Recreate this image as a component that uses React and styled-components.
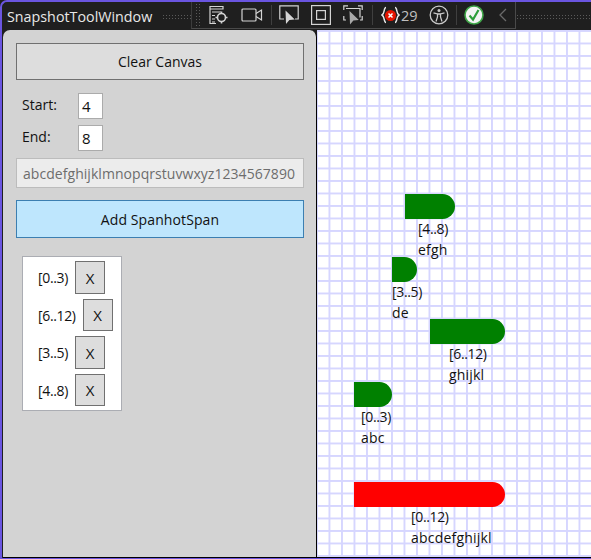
import styled, { createGlobalStyle } from 'styled-components'

const spans = [
  { id: 'a', left: 88, top: 164, width: 50, range: '[4..8)', text: 'efgh', indent: 13, color: '#008000' },
  { id: 'b', left: 75, top: 227, width: 25, range: '[3..5)', text: 'de', indent: 0, color: '#008000' },
  { id: 'c', left: 113, top: 289, width: 75, range: '[6..12)', text: 'ghijkl', indent: 19, color: '#008000' },
  { id: 'd', left: 37, top: 352, width: 38, range: '[0..3)', text: 'abc', indent: 7, color: '#008000' },
  { id: 'e', left: 37, top: 452, width: 151, range: '[0..12)', text: 'abcdefghijkl', indent: 57, color: '#ff0000' },
]

const rows = [
  { label: '[0..3)', tall: true },
  { label: '[6..12)', tall: false },
  { label: '[3..5)', tall: true },
  { label: '[4..8)', tall: false },
]

function App() {
  return (
    <Frame>
      <GlobalStyle />
      <TitleBar>
        <Title>SnapshotToolWindow</Title>
        <Gripper $fixed />
        <Toolbar>
          <VGrip />
          <Icon $w={20} $mr={12}>
            <svg width="20" height="20" viewBox="0 0 20 20" fill="none" stroke="#d4d4d4" strokeWidth="1.2">
              <path d="M1 1.500h13v2.500H1zM1 4v14.500h6M3 7h9M3 10.500h3M3 14h3M3 17h3" />
              <circle cx="12.500" cy="12.500" r="4" strokeWidth="1.600" />
              <path d="M12.500 6.500v2M12.500 16.500v2M6.500 12.500h2M16.500 12.500h2" strokeWidth="1.600" />
            </svg>
          </Icon>
          <Icon $w={22} $mr={8}>
            <svg width="22" height="14" viewBox="0 0 22 14" fill="none" stroke="#d4d4d4" strokeWidth="1.2">
              <rect x="1" y="1" width="14" height="12" rx="1" />
              <path d="M15 5.500 20.500 2v10L15 8.500" />
            </svg>
          </Icon>
          <Divider />
          <Icon $w={20} $ml={7} $mr={12}>
            <svg width="20" height="20" viewBox="0 0 20 20" fill="none" stroke="#d4d4d4" strokeWidth="1.2">
              <path d="M5 14H.8V.8h18.400V14H16" />
              <path d="M6.500 5.500 7 19l3.400-4 5.400-.4z" fill="#d4d4d4" stroke="none" />
            </svg>
          </Icon>
          <Icon $w={20} $mr={12}>
            <svg width="20" height="20" viewBox="0 0 20 20" fill="none" stroke="#d4d4d4" strokeWidth="1.2">
              <rect x=".6" y=".6" width="18.800" height="18.800" />
              <rect x="5.600" y="5.600" width="8.800" height="8.800" />
            </svg>
          </Icon>
          <Icon $w={20} $mr={9}>
            <svg width="20" height="20" viewBox="0 0 20 20" fill="none" stroke="#d4d4d4" strokeWidth="1.2">
              <path d="M.8 5V.8H5M15 .8h4.200V5M.8 11v4H3M19.200 11v4H17M3 3.500h14v9" />
              <path d="M6.500 6 7 19.500l3.400-4 5.400-.4z" fill="#a8a8a8" stroke="none" />
            </svg>
          </Icon>
          <Divider />
          <Icon $w={19} $ml={8}>
            <svg width="19" height="18" viewBox="0 0 19 18" fill="none" stroke="#e8e8e8" strokeWidth="1.500">
              <path d="M5 1.500C2.500 1.500 4 7.500 1 9c3 1.500 1.500 7.500 4 7.500M14 1.500c2.500 0 1 6 4 7.500-3 1.500-1.500 7.500-4 7.500" />
              <circle cx="9.500" cy="9.500" r="5.500" fill="#e51400" stroke="none" />
              <path d="m7.500 7.500 4 4m0-4-4 4" stroke="#fff" strokeWidth="1.500" />
            </svg>
          </Icon>
          <Count>29</Count>
          <Icon $w={20} $mr={7}>
            <svg width="20" height="20" viewBox="0 0 20 20" fill="none" stroke="#c8c8c8" strokeWidth="1.300">
              <circle cx="10" cy="10" r="8.800" />
              <circle cx="10" cy="5.500" r="1.500" fill="#c8c8c8" stroke="none" />
              <path d="M4.500 7.800 8.500 9v3L7 16.500M15.500 7.800 11.500 9v3l1.500 4.500M8.500 9h3" />
            </svg>
          </Icon>
          <Divider />
          <Icon $w={20} $ml={7} $mr={15}>
            <svg width="20" height="20" viewBox="0 0 20 20" fill="none">
              <circle cx="10" cy="10" r="9" fill="#f4f4f4" stroke="#3fa648" strokeWidth="1.600" />
              <path d="m5.500 10.500 3.500 4L14.500 5" stroke="#2e9e3a" strokeWidth="2.200" />
            </svg>
          </Icon>
          <Icon $w={8}>
            <svg width="8" height="14" viewBox="0 0 8 14" fill="none" stroke="#6a6a6a" strokeWidth="1.300">
              <path d="M7 1 1 7l6 6" />
            </svg>
          </Icon>
        </Toolbar>
        <Gripper />
      </TitleBar>
      <Body>
        <Panel>
          <PanelButton>Clear Canvas</PanelButton>
          <FieldRow>
            <FieldLabel>Start:</FieldLabel>
            <NumberBox>4</NumberBox>
          </FieldRow>
          <FieldRow $gap={6}>
            <FieldLabel>End:</FieldLabel>
            <NumberBox>8</NumberBox>
          </FieldRow>
          <TextField>abcdefghijklmnopqrstuvwxyz1234567890</TextField>
          <AddButton>Add SpanhotSpan</AddButton>
          <SpanList>
            {rows.map((row) => (
              <SpanRow key={row.label}>
                <RangeText>{row.label}</RangeText>
                <RemoveButton $tall={row.tall}>X</RemoveButton>
              </SpanRow>
            ))}
          </SpanList>
        </Panel>
        <Canvas>
          {spans.map((s) => (
            <SpanItem key={s.id} style={{ left: s.left, top: s.top }}>
              <Bar $width={s.width} $color={s.color} />
              <Caption $indent={s.indent}>
                <RangeText>{s.range}</RangeText>
                <SpanText>{s.text}</SpanText>
              </Caption>
            </SpanItem>
          ))}
        </Canvas>
      </Body>
    </Frame>
  )
}

const GlobalStyle = createGlobalStyle`
  html, body {
    margin: 0;
    padding: 0;
    background: #1f1f1f;
  }
  * {
    box-sizing: border-box;
  }
`

const Frame = styled.div`
  width: 591px;
  height: 559px;
  display: flex;
  flex-direction: column;
  overflow: hidden;
  background: #1f1f1f;
  border-left: 2px solid #6a55e0;
  border-top: 2px solid #6a55e0;
  border-bottom: 1px solid #6a55e0;
  border-top-left-radius: 7px;
  font-family: "Open Sans", "Noto Sans", sans-serif;
  font-size: 14px;
  color: #111;
`

const TitleBar = styled.div`
  height: 28px;
  flex: none;
  display: flex;
  align-items: center;
`

const Title = styled.div`
  padding-left: 5px;
  width: 160px;
  flex: none;
  color: #e8e8e8;
  font-size: 14.300px;
  white-space: nowrap;
`

const Gripper = styled.div`
  flex: ${(p) => (p.$fixed ? '0 0 29px' : '1')};
  height: 5px;
  background-image: radial-gradient(#5a5a5a 0.8px, transparent 1px);
  background-size: 3px 3px;
`

const Toolbar = styled.div`
  width: 325px;
  height: 28px;
  margin-top: -2px;
  flex: none;
  display: flex;
  align-items: center;
  border: 1px solid #4a4a4a;
  border-left-color: #3c3c3c;
  background: #1f1f1f;
`

const VGrip = styled.div`
  width: 6px;
  height: 24px;
  margin: 0 8px 0 3px;
  background-image: radial-gradient(#5a5a5a 0.8px, transparent 1px);
  background-size: 3px 3px;
`

const Icon = styled.div`
  width: ${(p) => p.$w}px;
  height: 20px;
  flex: none;
  display: flex;
  align-items: center;
  justify-content: center;
  margin-left: ${(p) => p.$ml || 0}px;
  margin-right: ${(p) => p.$mr || 0}px;
`

const Divider = styled.div`
  width: 1px;
  height: 20px;
  flex: none;
  background: #3f3f3f;
`

const Count = styled.div`
  width: 28px;
  margin-left: 1px;
  color: #c0c0c0;
  font-size: 14.500px;
`

const Body = styled.div`
  flex: 1;
  display: flex;
  min-height: 0;
`

const Panel = styled.div`
  width: 314px;
  flex: none;
  padding: 13px 12px 0 13px;
  margin-left: 1px;
  background: #d3d3d3;
  border-right: 1px solid #000;
  border-bottom: 1px solid #000;
  border-radius: 7px 7px 0 0;
  display: flex;
  flex-direction: column;
  align-items: flex-start;
`

const PanelButton = styled.div`
  width: 288px;
  height: 37px;
  flex: none;
  display: flex;
  align-items: center;
  justify-content: center;
  background: #dddddd;
  border: 1px solid #707070;
`

const FieldRow = styled.div`
  display: flex;
  align-items: center;
  margin-top: ${(p) => p.$gap || 13}px;
  padding-left: 6px;
`

const FieldLabel = styled.div`
  width: 56px;
  padding-bottom: 4px;
`

const NumberBox = styled.div`
  width: 25px;
  height: 26px;
  padding-left: 3px;
  display: flex;
  align-items: center;
  font-size: 15px;
  background: #fff;
  border: 1px solid #ababab;
`

const TextField = styled.div`
  width: 288px;
  height: 30px;
  margin-top: 7px;
  flex: none;
  padding-left: 6px;
  display: flex;
  align-items: center;
  white-space: nowrap;
  letter-spacing: 0.05px;
  color: #6d6d6d;
  background: #ececec;
  border: 1px solid #bcbcbc;
`

const AddButton = styled(PanelButton)`
  height: 38px;
  margin-top: 12px;
  letter-spacing: 0.1px;
  background: #bee6fd;
  border-color: #3c7fb1;
`

const SpanList = styled.div`
  width: 100px;
  height: 155px;
  margin: 18px 0 0 6px;
  flex: none;
  padding: 4px 0 0 15px;
  display: flex;
  flex-direction: column;
  gap: 5px;
  background: #fff;
  border: 1px solid #abadb3;
`

const SpanRow = styled.div`
  display: flex;
  align-items: center;
  gap: 7px;
`

const RangeText = styled.div`
  letter-spacing: -0.35px;
`

const SpanText = styled.div`
  letter-spacing: 0.2px;
`

const RemoveButton = styled.div`
  width: 30px;
  height: ${(p) => (p.$tall ? 33 : 32)}px;
  display: flex;
  align-items: center;
  justify-content: center;
  font-size: 15px;
  background: #dddddd;
  border: 1px solid #707070;
`

const Canvas = styled.div`
  flex: 1;
  position: relative;
  background-color: #fff;
  background-image:
    linear-gradient(to right, #d6d6ff 1.700px, transparent 1.700px),
    linear-gradient(to bottom, #d6d6ff 1.700px, transparent 1.700px);
  background-size: 12.500px 12.500px;
  background-position: 11.500px 0;
  border-bottom: 1px solid #000;
`

const SpanItem = styled.div`
  position: absolute;
`

const Bar = styled.div`
  width: ${(p) => p.$width}px;
  height: 25px;
  background: ${(p) => p.$color};
  border-radius: 0 12.500px 12.500px 0;
`

const Caption = styled.div`
  margin-left: ${(p) => p.$indent}px;
  margin-top: -1px;
  line-height: 21px;
  white-space: nowrap;
`

export default App
